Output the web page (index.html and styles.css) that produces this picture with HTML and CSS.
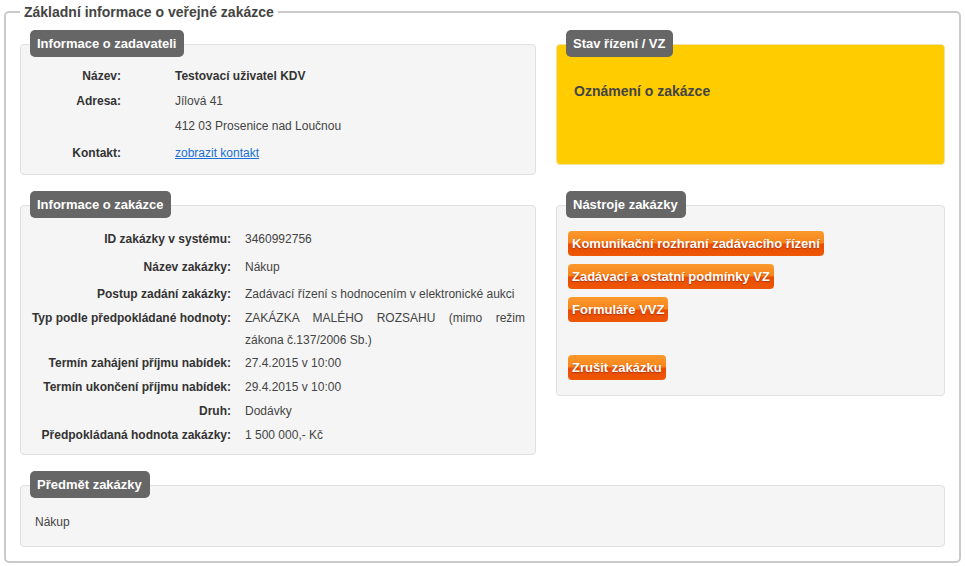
FILE: index.html
```html
<!DOCTYPE html>
<html lang="cs">
<head>
    <meta charset="UTF-8">
    <title>Základní informace o veřejné zakázce</title>
    <link rel="stylesheet" href="styles.css">
</head>
<body>
    <fieldset class="main">
        <legend>Základní informace o veřejné zakázce</legend>

        <div class="grid">
            <!-- Zadavatel -->
            <div class="panel">
                <div class="panel-title">Informace o zadavateli</div>
                <div class="panel-body info info-small">
                    <div class="row"><span class="label">Název:</span><span class="value strong">Testovací uživatel KDV</span></div>
                    <div class="row"><span class="label">Adresa:</span><span class="value">Jílová 41</span></div>
                    <div class="row"><span class="label"></span><span class="value">412 03 Prosenice nad Loučnou</span></div>
                    <div class="row row-last"><span class="label">Kontakt:</span><span class="value"><a href="#">zobrazit kontakt</a></span></div>
                </div>
            </div>

            <!-- Stav -->
            <div class="panel">
                <div class="panel-title">Stav řízení / VZ</div>
                <div class="panel-body state">Oznámení o zakázce</div>
            </div>

            <!-- Zakazka -->
            <div class="panel">
                <div class="panel-title">Informace o zakázce</div>
                <div class="panel-body info info-wide">
                    <div class="row row-tall"><span class="label">ID zakázky v systému:</span><span class="value">3460992756</span></div>
                    <div class="row row-tall"><span class="label">Název zakázky:</span><span class="value">Nákup</span></div>
                    <div class="row row-mid"><span class="label">Postup zadání zakázky:</span><span class="value">Zadávací řízení s hodnocením v elektronické aukci</span></div>
                    <div class="row row-multi"><span class="label">Typ podle předpokládané hodnoty:</span><span class="value justify">ZAKÁZKA MALÉHO ROZSAHU (mimo režim zákona č.137/2006 Sb.)</span></div>
                    <div class="row"><span class="label">Termín zahájení příjmu nabídek:</span><span class="value">27.4.2015 v 10:00</span></div>
                    <div class="row"><span class="label">Termín ukončení příjmu nabídek:</span><span class="value">29.4.2015 v 10:00</span></div>
                    <div class="row"><span class="label">Druh:</span><span class="value">Dodávky</span></div>
                    <div class="row"><span class="label">Předpokládaná hodnota zakázky:</span><span class="value">1 500 000,- Kč</span></div>
                </div>
            </div>

            <!-- Nastroje -->
            <div class="panel">
                <div class="panel-title">Nástroje zakázky</div>
                <div class="panel-body tools">
                    <a href="#" class="btn">Komunikační rozhraní zadávacího řízení</a>
                    <a href="#" class="btn">Zadávací a ostatní podmínky VZ</a>
                    <a href="#" class="btn">Formuláře VVZ</a>
                    <a href="#" class="btn btn-cancel">Zrušit zakázku</a>
                </div>
            </div>

            <!-- Predmet -->
            <div class="panel panel-full">
                <div class="panel-title">Předmět zakázky</div>
                <div class="panel-body subject">Nákup</div>
            </div>
        </div>
    </fieldset>
</body>
</html>
```

FILE: styles.css
```css
* {
    box-sizing: border-box;
}

body {
    margin: 0;
    padding: 0 4px;
    background: #fff;
    font-family: "Liberation Sans", Arial, sans-serif;
    font-size: 12px;
    color: #444;
}

.main {
    margin: 0;
    padding: 6px 14px 14px;
    border: 2px solid #cacaca;
    border-radius: 5px;
    min-width: 0;
}

.main legend {
    padding: 0 4px;
    font-size: 14px;
    font-weight: bold;
    line-height: 24px;
    color: #444;
}

.grid {
    display: grid;
    grid-template-columns: 516px 1fr;
    column-gap: 20px;
    row-gap: 16px;
    align-items: start;
}

.panel-full {
    grid-column: 1 / 3;
}

.panel-title {
    position: relative;
    z-index: 1;
    width: fit-content;
    margin: 0 0 -13px 10px;
    padding: 0 8px 0 7px;
    height: 27px;
    line-height: 27px;
    background: #666;
    color: #fff;
    font-size: 13px;
    font-weight: bold;
    border-radius: 5px;
}

.panel-body {
    background: #f5f5f5;
    border: 1px solid #e0e0e0;
    border-radius: 4px;
}

/* tabulky s udaji */
.info {
    padding: 19px 10px 7px 0;
}

.row {
    display: flex;
    padding: 3px 0;
    line-height: 18px;
}

.label {
    flex: none;
    text-align: right;
    font-weight: bold;
    color: #333;
}

.value {
    flex: 1;
    color: #444;
}

.value.strong {
    font-weight: bold;
    color: #333;
}

.info-small .label {
    width: 100px;
}

.info-small .value {
    padding-left: 54px;
}

.info-small .row {
    padding: 3px 0 4px;
}

.info-small .row-last {
    padding: 5px 0 5px;
}

.info-wide .label {
    width: 210px;
}

.info-wide .value {
    padding-left: 14px;
}

.row-tall {
    padding: 5px 0;
}

.row-mid {
    padding: 4px 0;
}

.row-multi {
    padding: 0;
    line-height: 22px;
}

.justify {
    text-align: justify;
}

.value a {
    color: #1a6fd6;
}

/* stav */
.state {
    min-height: 121px;
    padding: 38px 17px;
    background: #ffcc00;
    border-color: #f0e2a0;
    font-size: 14px;
    font-weight: bold;
    color: #444;
}

/* nastroje */
.tools {
    display: flex;
    flex-direction: column;
    align-items: flex-start;
    gap: 8px;
    padding: 25px 11px 15px;
}

.btn {
    display: inline-block;
    height: 25px;
    line-height: 25px;
    padding: 0 4px;
    border-radius: 4px;
    background: linear-gradient(#fb9a2c 0%, #f7841c 48%, #ea4a02 52%, #ee5806 100%);
    color: #fff;
    font-size: 13px;
    font-weight: bold;
    text-decoration: none;
    text-shadow: 0 1px 1px rgba(120, 30, 0, 0.5);
}

.btn-cancel {
    margin-top: 25px;
}

/* predmet */
.subject {
    padding: 27px 14px 15px;
    line-height: 18px;
}
```
